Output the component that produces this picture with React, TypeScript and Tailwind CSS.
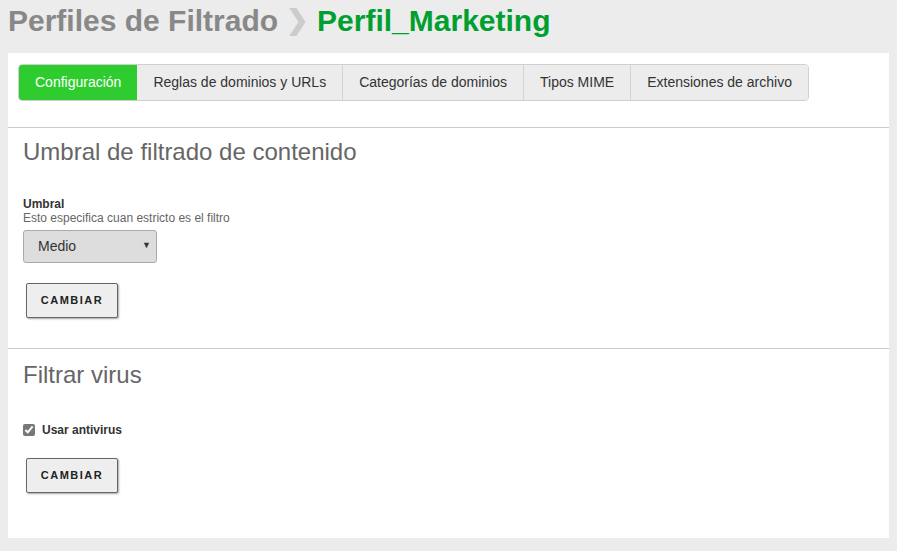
import { useState } from "react";

const tabs = [
  "Configuración",
  "Reglas de dominios y URLs",
  "Categorías de dominios",
  "Tipos MIME",
  "Extensiones de archivo",
];

function ChangeButton() {
  return (
    <button className="h-[35px] w-[92px] border border-[#666] rounded-[2px] bg-[#eeeeee] text-[11px] font-bold tracking-[1.5px] text-[#222] shadow-[1px_1px_2px_rgba(0,0,0,0.35)]">
      CAMBIAR
    </button>
  );
}

export default function App() {
  const [active, setActive] = useState(0);
  const [antivirus, setAntivirus] = useState(true);

  return (
    <div
      className="min-h-[551px] w-[897px] bg-[#ececec] px-2"
      style={{ fontFamily: '"Liberation Sans", Arial, sans-serif' }}
    >
      {/* Title */}
      <h1 className="flex items-center h-[53px] pb-3 text-[30px] font-bold leading-none">
        <span className="text-[#888888]">Perfiles de Filtrado</span>
        <span className="mx-[8px] text-[#cccccc] text-[27px]">❯</span>
        <span className="text-[#00a030]">Perfil_Marketing</span>
      </h1>

      {/* Panel */}
      <div className="bg-white h-[485px]">
        <div className="px-[10px] pt-[11px] pb-[26px]">
          <div className="inline-flex h-[37px] rounded-[4px] border border-[#d0d0d0] overflow-hidden">
            {tabs.map((t, i) => (
              <button
                key={t}
                onClick={() => setActive(i)}
                className={`px-[16px] text-[14px] ${
                  i === active
                    ? "bg-[#2ecc2e] text-white"
                    : "bg-[#ececec] text-[#333] border-l border-[#d4d4d4]"
                } ${i === 1 ? "border-l-0" : ""}`}
              >
                {t}
              </button>
            ))}
          </div>
        </div>

        {/* Umbral */}
        <section className="border-t border-[#cccccc] px-[15px] pt-[11px] pb-[30px]">
          <h2 className="text-[24px] text-[#666666] leading-[26px]">
            Umbral de filtrado de contenido
          </h2>
          <div className="mt-[32px] text-[12px] leading-[14px]">
            <div className="font-bold text-[#333]">Umbral</div>
            <div className="text-[#666]">Esto especifica cuan estricto es el filtro</div>
          </div>
          <div className="relative mt-[5px] w-[134px]">
            <select
              defaultValue="Medio"
              className="h-[33px] w-full appearance-none rounded-[3px] border border-[#aaaaaa] bg-[#dddddd] pl-[14px] text-[14px] text-[#333]"
            >
              <option>Bajo</option>
              <option>Medio</option>
              <option>Alto</option>
            </select>
            <span className="pointer-events-none absolute right-[6px] top-[9px] text-[9px] text-[#333]">
              ▼
            </span>
          </div>
          <div className="mt-[20px] pl-[3px]">
            <ChangeButton />
          </div>
        </section>

        {/* Virus */}
        <section className="border-t border-[#cccccc] px-[15px] pt-[13px]">
          <h2 className="text-[24px] text-[#666666] leading-[26px]">Filtrar virus</h2>
          <label className="mt-[33px] flex items-center gap-[7px] text-[12px] font-bold text-[#333]">
            <input
              type="checkbox"
              checked={antivirus}
              onChange={(e) => setAntivirus(e.target.checked)}
              className="m-0 h-[12px] w-[12px] accent-[#777]"
            />
            Usar antivirus
          </label>
          <div className="mt-[19px] pl-[3px]">
            <ChangeButton />
          </div>
        </section>
      </div>
    </div>
  );
}
